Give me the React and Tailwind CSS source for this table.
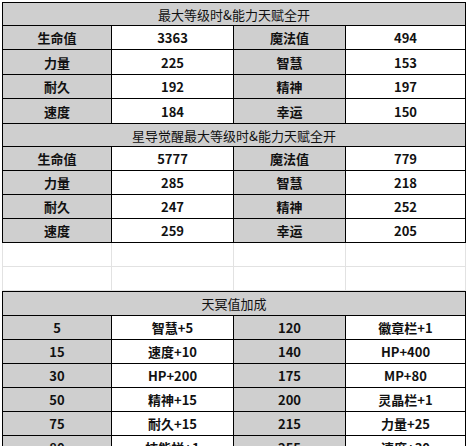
import React from 'react';

const font = { fontFamily: '"Noto Sans CJK SC", "Noto Sans", sans-serif' };

const cols = 'grid grid-cols-[109px_122px_112px_120px]';
const cellBase = 'flex items-center justify-center text-center border-r border-b border-black text-[13px] leading-none text-[#111]';
const grayCell = `${cellBase} bg-[#cfcfcf] font-bold`;
const whiteCell = `${cellBase} bg-white font-bold`;
const titleCell = `${cellBase} col-span-4 bg-[#cfcfcf] font-normal`;

const maxStats = [
    ['生命值', '3363', '魔法值', '494'],
    ['力量', '225', '智慧', '153'],
    ['耐久', '192', '精神', '197'],
    ['速度', '184', '幸运', '150'],
];

const awakenStats = [
    ['生命值', '5777', '魔法值', '779'],
    ['力量', '285', '智慧', '218'],
    ['耐久', '247', '精神', '252'],
    ['速度', '259', '幸运', '205'],
];

const bonus = [
    ['5', '智慧+5', '120', '徽章栏+1'],
    ['15', '速度+10', '140', 'HP+400'],
    ['30', 'HP+200', '175', 'MP+80'],
    ['50', '精神+15', '200', '灵晶栏+1'],
    ['75', '耐久+15', '215', '力量+25'],
    ['80', '技能栏+1', '255', '速度+30'],
];

function Rows({ rows, heights }) {
    return rows.map((r, i) => (
        <React.Fragment key={i}>
            <div className={`${grayCell} ${heights[i]}`}>{r[0]}</div>
            <div className={`${whiteCell} ${heights[i]}`}>{r[1]}</div>
            <div className={`${grayCell} ${heights[i]}`}>{r[2]}</div>
            <div className={`${whiteCell} ${heights[i]}`}>{r[3]}</div>
        </React.Fragment>
    ));
}

export default function App() {
    return (
        <div className="w-[470px] h-[446px] overflow-hidden bg-white pl-[2px] pt-[2px]" style={font}>
            {/* stat tables */}
            <div className={`${cols} w-[464px] border-l border-t border-black`}>
                <div className={`${titleCell} h-[23px]`}>最大等级时&amp;能力天赋全开</div>
                <Rows rows={maxStats} heights={['h-[24px]', 'h-[25px]', 'h-[24px]', 'h-[25px]']} />
                <div className={`${titleCell} h-[23px]`}>星导觉醒最大等级时&amp;能力天赋全开</div>
                <Rows rows={awakenStats} heights={['h-[24px]', 'h-[24px]', 'h-[24px]', 'h-[24px]']} />
            </div>

            {/* empty sheet rows */}
            <div className={`${cols} w-[464px] border-l border-[#e2e2e2]`}>
                {Array.from({ length: 8 }).map((_, i) => (
                    <div key={i} className="h-[24px] border-r border-b border-[#e2e2e2]" />
                ))}
            </div>

            {/* bonus table */}
            <div className={`${cols} w-[464px] border-l border-t border-black`}>
                <div className={`${titleCell} h-[24px]`}>天冥值加成</div>
                <Rows rows={bonus} heights={['h-[24px]', 'h-[24px]', 'h-[24px]', 'h-[24px]', 'h-[24px]', 'h-[24px]']} />
            </div>
        </div>
    );
}
